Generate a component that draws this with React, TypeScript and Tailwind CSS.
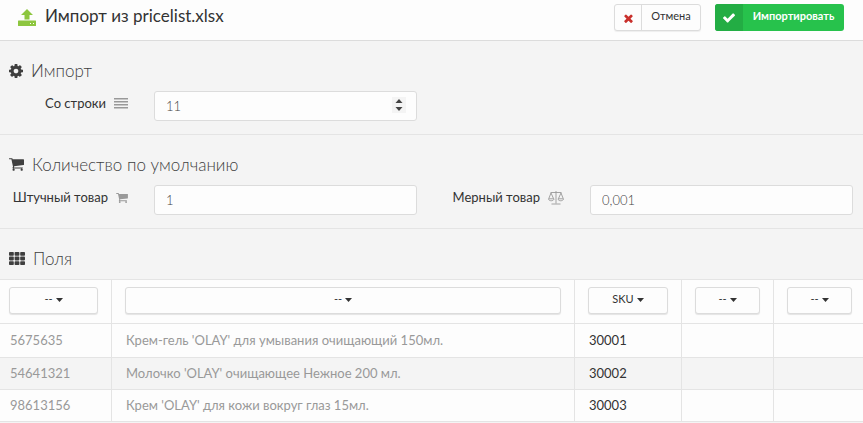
import React, { useState } from "react";

type IconProps = { className?: string };

const UploadIcon = ({ className }: IconProps) => (
  <svg viewBox="0 0 18 17" fill="currentColor" className={className} aria-hidden="true">
    <path d="M9 0l6 6h-3.500v4.500h-5V6H3z" />
    <path
      fillRule="evenodd"
      d="M0.500 11.500h17a.5.5 0 0 1 .5.5v4.500a.5.5 0 0 1-.5.5H.5a.5.5 0 0 1-.5-.5V12a.5.5 0 0 1 .5-.5zM12 14v1h1v-1zm3 0v1h1v-1z"
    />
  </svg>
);

const CogIcon = ({ className }: IconProps) => (
  <svg viewBox="128 128 1536 1536" fill="currentColor" className={className} aria-hidden="true">
    <path d="M1152 896q0-106-75-181t-181-75-181 75-75 181 75 181 181 75 181-75 75-181zm512-109v222q0 12-8 23t-20 13l-185 28q-19 54-39 91 35 50 107 138 10 12 10 25t-9 23q-27 37-99 108t-94 71q-12 0-26-9l-138-108q-44 23-91 38-16 136-29 186-7 28-36 28h-222q-14 0-24.500-8.500t-11.500-21.500l-28-184q-49-16-90-37l-141 107q-10 9-25 9-14 0-25-11-126-114-165-168-7-10-7-23 0-12 8-23 15-21 51-66.500t54-70.500q-27-50-41-99l-183-27q-13-2-21-12.500t-8-23.500v-222q0-12 8-23t19-13l186-28q14-46 39-92-40-57-107-138-10-12-10-24 0-10 9-23 26-36 98.500-107.500t94.500-71.500q13 0 26 10l138 107q44-23 91-38 16-136 29-186 7-28 36-28h222q14 0 24.500 8.500t11.500 21.500l28 184q49 16 90 37l142-107q9-9 24-9 13 0 25 10 129 119 165 170 7 8 7 22 0 12-8 23-15 21-51 66.500t-54 70.500q26 50 41 98l183 28q13 2 21 12.500t8 23.500z" />
  </svg>
);

const CartIcon = ({ className }: IconProps) => (
  <svg viewBox="64 256 1664 1408" fill="currentColor" className={className} aria-hidden="true">
    <path d="M704 1536q0 52-38 90t-90 38-90-38-38-90 38-90 90-38 90 38 38 90zm896 0q0 52-38 90t-90 38-90-38-38-90 38-90 90-38 90 38 38 90zm128-1088v512q0 24-16.500 42.500t-40.500 21.500l-1044 122q13 60 13 70 0 16-24 64h920q26 0 45 19t19 45-19 45-45 19h-1024q-26 0-45-19t-19-45q0-11 8-31.500t16-36 21.500-40 15.500-29.500l-177-823h-204q-26 0-45-19t-19-45 19-45 45-19h256q16 0 28.500 6.500t19.500 15.500 13 24.500 8 26 5.500 29.500 4.500 26h1201q26 0 45 19t19 45z" />
  </svg>
);

const GridIcon = ({ className }: IconProps) => (
  <svg viewBox="0 0 16 13" fill="currentColor" className={className} aria-hidden="true">
    {[0, 4.6, 9.2].map((y) =>
      [0, 5.6, 11.2].map((x) => (
        <rect key={`${x}-${y}`} x={x} y={y} width="4.800" height="3.800" rx="0.800" />
      ))
    )}
  </svg>
);

const LinesIcon = ({ className }: IconProps) => (
  <svg viewBox="0 0 14 11" fill="currentColor" className={className} aria-hidden="true">
    <path d="M0 0h14v1.600H0zM0 3h14v1.600H0zM0 6h14v1.600H0zM0 9h14v1.600H0z" />
  </svg>
);

const ScaleIcon = ({ className }: IconProps) => (
  <svg viewBox="0 0 16 14" fill="none" stroke="currentColor" strokeWidth="0.900" className={className} aria-hidden="true">
    <path d="M2.500 1.500h11M8 0v12.500M3.500 13h9M3 2L.8 7.500M3 2l2.500 5.500M13 2l-2.500 5.500M13 2l2.200 5.500" />
    <path d="M.5 7.800h5.500c0 2.600-5.500 2.600-5.500 0zM10 7.800h5.500c0 2.600-5.500 2.600-5.500 0z" />
  </svg>
);

const TimesIcon = ({ className }: IconProps) => (
  <svg viewBox="302 302 1188 1252" fill="currentColor" className={className} aria-hidden="true">
    <path d="M1490 1322q0 40-28 68l-136 136q-28 28-68 28t-68-28l-294-294-294 294q-28 28-68 28t-68-28l-136-136q-28-28-28-68t28-68l294-294-294-294q-28-28-28-68t28-68l136-136q28-28 68-28t68 28l294 294 294-294q28-28 68-28t68 28l136 136q28 28 28 68t-28 68l-294 294 294 294q28 28 28 68z" />
  </svg>
);

const CheckIcon = ({ className }: IconProps) => (
  <svg viewBox="121 334 1550 1188" fill="currentColor" className={className} aria-hidden="true">
    <path d="M1671 566q0 40-28 68l-724 724-136 136q-28 28-68 28t-68-28l-136-136-362-362q-28-28-28-68t28-68l136-136q28-28 68-28t68 28l294 295 656-657q28-28 68-28t68 28l136 136q28 28 28 68z" />
  </svg>
);

type SectionTitleProps = { icon: React.ReactNode; children: React.ReactNode };

const SectionTitle = ({ icon, children }: SectionTitleProps) => (
  <h2 className="flex h-[50px] items-center gap-2 px-[9px] pt-[9px] text-[17px] font-light text-[#3f3f3f]">
    {icon}
    {children}
  </h2>
);

type FieldProps = {
  id: string;
  label: string;
  icon: React.ReactNode;
  children: React.ReactNode;
};

const Field = ({ id, label, icon, children }: FieldProps) => (
  <div className="flex gap-[26px]">
    <label
      htmlFor={id}
      className="flex h-[25px] w-32 shrink-0 items-center justify-end gap-2 whitespace-nowrap text-[13px] text-[#333]"
    >
      {label}
      {icon}
    </label>
    <div className="relative min-w-0 flex-1">{children}</div>
  </div>
);

const inputClass =
  "h-[30px] w-full rounded-[3px] border border-[#dcdcdc] bg-[#fdfdfd] px-[11px] text-[13px] font-light text-[#444] outline-none focus:border-[#b5b5b5]";

const columnOptions = ["--", "SKU"];

const ColumnSelect = ({ name, initial }: { name: string; initial: string }) => {
  const [value, setValue] = useState(initial);

  return (
    <label className="flex h-[27px] items-center justify-center gap-[3px] rounded-[3px] border border-[#dcdcdc] bg-[#fdfdfd] pb-0.5 text-[11px] font-normal text-[#333] shadow-[0_1px_1px_#e4e4e4]">
      <select
        aria-label={name}
        value={value}
        onChange={(e) => setValue(e.target.value)}
        className="field-sizing-content appearance-none bg-transparent outline-none"
      >
        {columnOptions.map((option) => (
          <option key={option}>{option}</option>
        ))}
      </select>
      <svg viewBox="0 0 7 4" fill="currentColor" className="h-1 w-[7px]" aria-hidden="true">
        <path d="M0 0h7L3.500 4z" />
      </svg>
    </label>
  );
};

const columns = ["--", "--", "SKU", "--", "--"];

const rows = [
  ["5675635", "Крем-гель 'OLAY' для умывания очищающий 150мл.", "30001", "", ""],
  ["54641321", "Молочко 'OLAY' очищающее Нежное 200 мл.", "30002", "", ""],
  ["98613156", "Крем 'OLAY' для кожи вокруг глаз 15мл.", "30003", "", ""],
];

const App = () => {
  const [startRow, setStartRow] = useState(11);

  return (
    <div className="min-h-screen bg-[#f4f4f4] font-['Lato','Open_Sans',sans-serif] text-[#333]">
      {/* Header */}
      <header className="flex h-[41px] items-center border-b border-[#dcdcdc] bg-[#fdfdfd] pr-[19px] pb-[6px] pl-[18px]">
        <UploadIcon className="h-[17px] w-[18px] text-[#8dc63f]" />
        <h1 className="ml-[9px] pb-0.5 text-[17px] leading-5 text-[#333]">Импорт из pricelist.xlsx</h1>
        <div className="ml-auto flex gap-[14px]">
          <button
            type="button"
            className="flex h-[27px] w-[87px] overflow-hidden rounded-[3px] border border-[#dcdcdc] bg-[#fdfdfd] text-[11px] shadow-[0_1px_1px_#eee]"
          >
            <span className="flex h-full w-[27px] items-center justify-center border-r border-[#dcdcdc] pt-0.5">
              <TimesIcon className="size-[9px] text-[#c9302c]" />
            </span>
            <span className="flex-1 pt-[3px]">Отмена</span>
          </button>
          <button
            type="button"
            className="flex h-[27px] w-[129px] overflow-hidden rounded-[3px] bg-[#27c24c] text-[11px] font-bold text-white"
          >
            <span className="flex h-full w-[28px] items-center justify-center bg-[#23ad44] pt-0.5">
              <CheckIcon className="h-[10px] w-3" />
            </span>
            <span className="flex-1 pt-1">Импортировать</span>
          </button>
        </div>
      </header>

      {/* Import */}
      <section className="border-b border-[#e4e4e4] pb-[13px]">
        <SectionTitle icon={<CogIcon className="size-[14px]" />}>Импорт</SectionTitle>
        <div className="grid grid-cols-2 gap-x-[19px] pr-[10px]">
          <Field id="start-row" label="Со строки" icon={<LinesIcon className="h-[11px] w-[14px] text-[#999]" />}>
            <input
              id="start-row"
              type="number"
              value={startRow}
              onChange={(e) => setStartRow(Number(e.target.value))}
              className={`${inputClass} [appearance:textfield] [&::-webkit-inner-spin-button]:appearance-none`}
            />
            <div className="absolute top-[6px] right-[11px] flex h-4 w-[14px] flex-col bg-[#f4f4f4] text-[#444]">
              <button
                type="button"
                aria-label="Увеличить"
                onClick={() => setStartRow(startRow + 1)}
                className="flex flex-1 items-center justify-center"
              >
                <svg viewBox="0 0 8 4" fill="currentColor" className="h-1 w-2">
                  <path d="M4 0l3.500 4h-7z" />
                </svg>
              </button>
              <button
                type="button"
                aria-label="Уменьшить"
                onClick={() => setStartRow(startRow - 1)}
                className="flex flex-1 items-center justify-center"
              >
                <svg viewBox="0 0 8 4" fill="currentColor" className="h-1 w-2">
                  <path d="M.5 0h7L4 4z" />
                </svg>
              </button>
            </div>
          </Field>
        </div>
      </section>

      {/* Default quantity */}
      <section className="border-b border-[#e4e4e4] pb-[13px]">
        <SectionTitle icon={<CartIcon className="h-[13px] w-[15px]" />}>Количество по умолчанию</SectionTitle>
        <div className="grid grid-cols-2 gap-x-[19px] pr-[10px]">
          <Field id="piece-qty" label="Штучный товар" icon={<CartIcon className="h-[10px] w-3 text-[#999]" />}>
            <input id="piece-qty" type="text" defaultValue="1" className={inputClass} />
          </Field>
          <Field id="weight-qty" label="Мерный товар" icon={<ScaleIcon className="h-[14px] w-4 text-[#999]" />}>
            <input id="weight-qty" type="text" defaultValue="0,001" className={inputClass} />
          </Field>
        </div>
      </section>

      {/* Fields */}
      <section>
        <SectionTitle icon={<GridIcon className="h-[13px] w-4" />}>Поля</SectionTitle>
        <table className="w-full table-fixed border-separate border-spacing-0 border-t border-[#e4e4e4] bg-[#fdfdfd] text-[13px]">
          <colgroup>
            <col className="w-[112px]" />
            <col />
            <col className="w-[107px]" />
            <col className="w-[92px]" />
            <col className="w-[89px]" />
          </colgroup>
          <thead>
            <tr>
              {columns.map((column, i) => (
                <th
                  key={i}
                  className="h-11 border-r border-b border-[#e4e4e4] px-[13px] pt-[7px] pb-2 align-top first:pl-[9px] last:border-r-0 last:pr-[11px]"
                >
                  <ColumnSelect name={`Столбец ${i + 1}`} initial={column} />
                </th>
              ))}
            </tr>
          </thead>
          <tbody>
            {rows.map((row) => (
              <tr key={row[0]} className="h-8 first:h-[34px] even:bg-[#f4f4f4]">
                {row.map((cell, i) => (
                  <td
                    key={i}
                    className="truncate border-r border-b border-[#e4e4e4] px-[14px] text-[#999] first:pl-[10px] last:border-r-0 nth-3:text-[#333]"
                  >
                    {cell}
                  </td>
                ))}
              </tr>
            ))}
          </tbody>
        </table>
      </section>
    </div>
  );
};

export default App;
